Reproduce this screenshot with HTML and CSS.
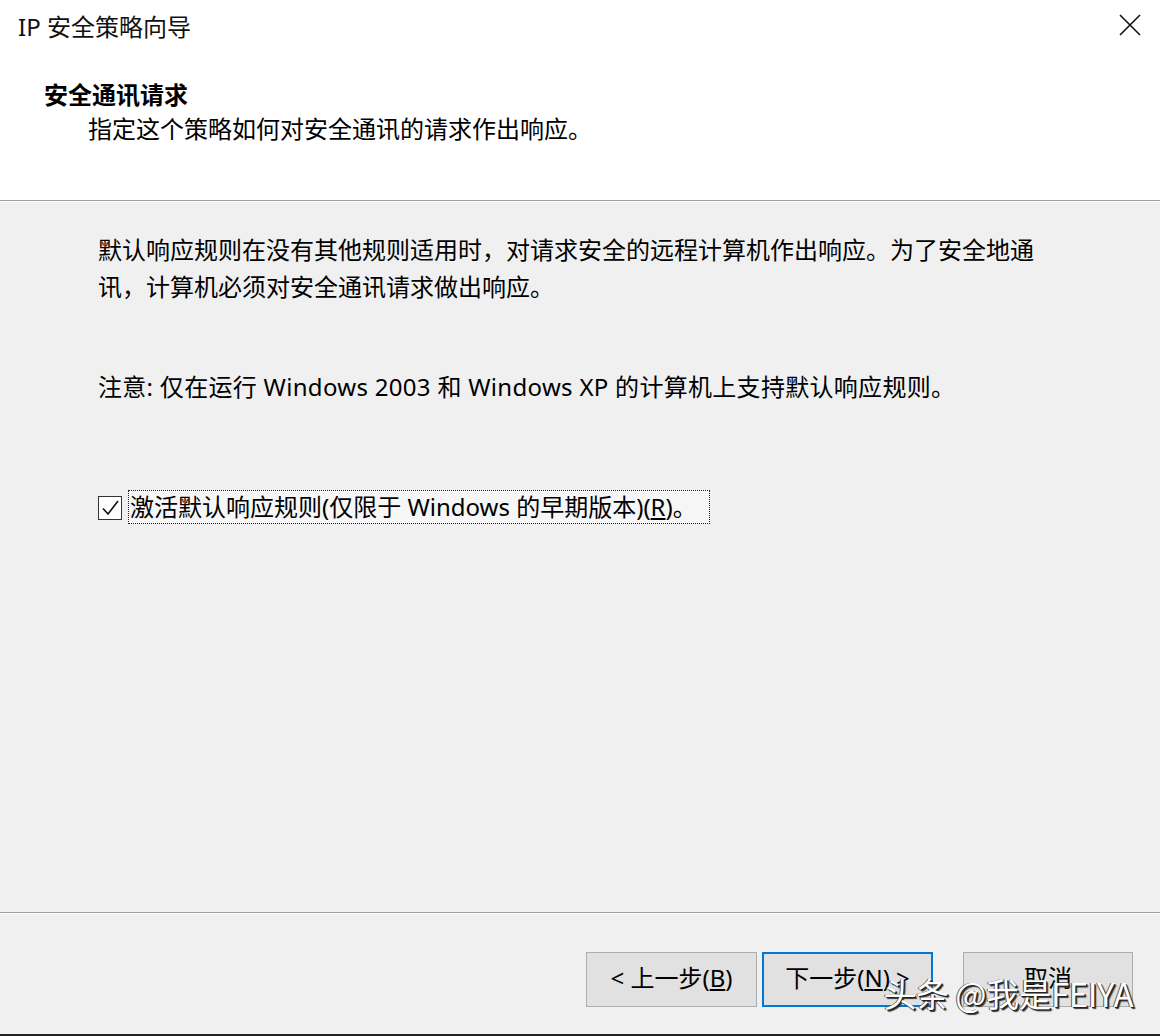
FILE: index.html
```html
<!DOCTYPE html>
<html lang="zh-CN">
<head>
<meta charset="utf-8">
<title>IP 安全策略向导</title>
<link rel="stylesheet" href="styles.css">
</head>
<body>
<div class="dialog">
  <div class="top">
    <div class="titlebar">
      <span class="title">IP 安全策略向导</span>
      <svg class="close" width="22" height="22" viewBox="0 0 22 22"><path d="M1 1 L21 21 M21 1 L1 21" stroke="#111" stroke-width="1.6" fill="none"/></svg>
    </div>
    <div class="header">
      <div class="h-title">安全通讯请求</div>
      <div class="h-sub">指定这个策略如何对安全通讯的请求作出响应。</div>
    </div>
  </div>
  <div class="main">
    <p class="para">默认响应规则在没有其他规则适用时，对请求安全的远程计算机作出响应。为了安全地通讯，计算机必须对安全通讯请求做出响应。</p>
    <p class="note">注意: 仅在运行 Windows 2003 和 Windows XP 的计算机上支持默认响应规则。</p>
    <div class="check-row">
      <span class="box"><svg width="22" height="22" viewBox="0 0 22 22"><path d="M4 11.5 L9 17 L19 4" stroke="#111" stroke-width="1.6" fill="none"/></svg></span>
      <span class="label">激活默认响应规则(仅限于 Windows 的早期版本)(<u>R</u>)。</span>
    </div>
  </div>
  <div class="footer">
    <button class="btn">&lt; 上一步(<u>B</u>)</button>
    <button class="btn primary">下一步(<u>N</u>) &gt;</button>
    <button class="btn cancel">取消</button>
    <span class="watermark">头条 @我是FEIYA</span>
  </div>
</div>
</body>
</html>
```
FILE: styles.css
```css
html, body {
  margin: 0;
  padding: 0;
}
body {
  width: 1160px;
  height: 1036px;
  overflow: hidden;
  font-family: "Noto Sans", "Noto Sans CJK SC", sans-serif;
  color: #000;
  background: #f0f0f0;
}
.dialog {
  display: flex;
  flex-direction: column;
  height: 1036px;
  box-sizing: border-box;
  border-bottom: 2px solid #222;
  position: relative;
}
.top {
  background: #fff;
  height: 200px;
  border-bottom: 1px solid #a0a0a0;
  box-shadow: 0 1px 0 #fff;
  flex: none;
}
.titlebar {
  height: 50px;
  display: flex;
  align-items: center;
  justify-content: space-between;
  padding: 0 19px 0 18px;
}
.title {
  font-size: 24px;
  color: #111;
}
.close {
  display: block;
  margin-top: -1px;
}
.header {
  padding-top: 28px;
  font-size: 24px;
  line-height: 34px;
}
.h-title {
  padding-left: 44px;
  font-weight: bold;
}
.h-sub {
  padding-left: 88px;
}
.main {
  flex: 1;
  padding: 30px 60px 0 98px;
  font-size: 24px;
}
.para {
  margin: 0;
  line-height: 37px;
  width: 940px;
}
.note {
  margin: 63px 0 0;
  line-height: 37px;
  letter-spacing: 0.3px;
}
.check-row {
  margin-top: 84px;
  display: flex;
  align-items: center;
  height: 36px;
}
.box {
  width: 22px;
  height: 22px;
  border: 1px solid #333;
  background: #fff;
  display: flex;
  margin-top: 2px;
}
.label {
  margin-left: 6px;
  border: 1px dotted #222;
  padding: 0 0 0 1px;
  height: 34px;
  line-height: 32px;
  width: 582px;
  box-sizing: border-box;
  background: #f6f6f6;
  white-space: nowrap;
}
.footer {
  flex: none;
  height: 122px;
  border-top: 1px solid #a0a0a0;
  box-shadow: inset 0 1px 0 #fff;
  box-sizing: border-box;
  display: flex;
  align-items: flex-start;
  justify-content: flex-end;
  padding: 39px 27px 0 0;
  position: relative;
}
.btn {
  width: 171px;
  height: 55px;
  font-family: "Noto Sans", "Noto Sans CJK SC", sans-serif;
  font-size: 24px;
  color: #000;
  background: #e1e1e1;
  border: 1px solid #adadad;
  padding: 0 0 6px;
  margin: 0;
}
.btn.primary {
  margin-left: 5px;
  border: 2px solid #0078d7;
}
.btn.cancel {
  margin-left: 30px;
  width: 170px;
}
.watermark {
  position: absolute;
  right: 27px;
  top: 56px;
  font-family: "Noto Sans CJK SC", sans-serif;
  font-size: 33px;
  letter-spacing: -0.5px;
  color: #fff;
  text-shadow: 1px 1px 0 #222, -1px 0 0 #555, 2px 2px 1px #333;
  white-space: nowrap;
}
```
